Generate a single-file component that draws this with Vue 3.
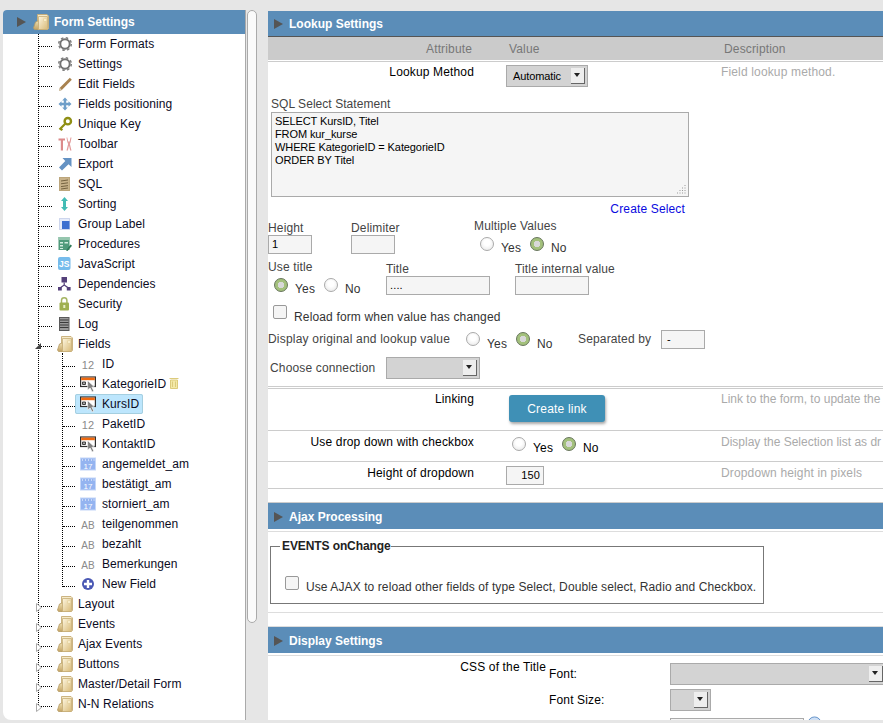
<script setup>
const formItems = [
  ['Form Formats', 'gear'], ['Settings', 'gear'], ['Edit Fields', 'pencil'], ['Fields positioning', 'move'],
  ['Unique Key', 'key'], ['Toolbar', 'tools'], ['Export', 'export'], ['SQL', 'sql'], ['Sorting', 'sort'],
  ['Group Label', 'group'], ['Procedures', 'proc'], ['JavaScript', 'js'], ['Dependencies', 'dep'],
  ['Security', 'lock'], ['Log', 'log']
]
const fields = [
  ['ID', 'num'], ['KategorieID', 'sel'], ['KursID', 'sel'], ['PaketID', 'num'], ['KontaktID', 'sel'],
  ['angemeldet_am', 'cal'], ['bestätigt_am', 'cal'], ['storniert_am', 'cal'], ['teilgenommen', 'ab'],
  ['bezahlt', 'ab'], ['Bemerkungen', 'ab'], ['New Field', 'plus']
]
const folders = ['Layout', 'Events', 'Ajax Events', 'Buttons', 'Master/Detail Form', 'N-N Relations']
const sql = 'SELECT KursID, Titel\nFROM kur_kurse\nWHERE KategorieID = KategorieID\nORDER BY Titel'
</script>

<template>
  <div class="page">
    <svg class="defs" width="0" height="0" aria-hidden="true">
      <defs>
        <linearGradient id="fold" x1="0" y1="0" x2="1" y2="1">
          <stop offset="0" stop-color="#fdf6e0" />
          <stop offset="1" stop-color="#d8ba78" />
        </linearGradient>
        <linearGradient id="fold2" x1="0" y1="0" x2="0" y2="1">
          <stop offset="0" stop-color="#efe0b4" />
          <stop offset="1" stop-color="#c4a464" />
        </linearGradient>
        <symbol id="i-folder" viewBox="0 0 16 16">
          <path d="M4.500 .5h9.500l1.500 1.500v12.500l-1 1H4.500z" fill="#f6ebca" stroke="#c6ad76" stroke-width=".9" />
          <path d="M.5 14l2-6 3.500-1.500V15.500H1.500z" fill="url(#fold2)" stroke="#b59c64" stroke-width=".8" />
          <path d="M5.500 2.500h9v12a1 1 0 0 1-1 1H5.500z" fill="url(#fold)" stroke="#c6ad76" stroke-width=".8" />
          <rect x="10.500" y="5" width="3" height="2" fill="#fff6d8" stroke="#dfca92" stroke-width=".5" />
        </symbol>
        <symbol id="i-gear" viewBox="0 0 16 16">
          <circle cx="8" cy="8" r="4.700" fill="none" stroke="#737373" stroke-width="2" />
          <circle cx="8" cy="8" r="6.300" fill="none" stroke="#808080" stroke-width="1.500" stroke-dasharray="2.500 2.450" />
        </symbol>
        <symbol id="i-pencil" viewBox="0 0 16 16">
          <path d="M2 15l.8-3.300L12.800 1.800l2 2L4.800 14z" fill="#a8824f" />
          <path d="M2 15l.8-3.300 2 2.300z" fill="#d9cdb5" />
        </symbol>
        <symbol id="i-move" viewBox="0 0 16 16">
          <path d="M8 1.500l2.800 3H9.200v2.300h2.300V5.200l3 2.800-3 2.800V9.200H9.200v2.300h1.600L8 14.500l-2.800-3h1.600V9.200H4.500v1.600l-3-2.800 3-2.800v1.600h2.300V4.500H5.200z" fill="#6f9fc9" />
        </symbol>
        <symbol id="i-key" viewBox="0 0 16 16">
          <circle cx="10.800" cy="5.200" r="3.200" fill="none" stroke="#8f8f14" stroke-width="2.400" />
          <path d="M8.500 7.500L2.500 13.500M3.500 12.500l1.800 1.800" stroke="#8f8f14" stroke-width="2.200" fill="none" />
        </symbol>
        <symbol id="i-tools" viewBox="0 0 16 16">
          <path d="M1.500 2.500h6.500v2H6v10H3.800v-10H1.500z" fill="#dc8a8a" />
          <path d="M9.500 1.500l.8 4.500 .8 2-1.600 6.500h1.400l1.100-5 1.100 5h1.400l-1.600-6.500.8-2 .8-4.500h-1l-.9 4h-1.400l-.9-4z" fill="#e29c9c" />
        </symbol>
        <symbol id="i-export" viewBox="0 0 16 16">
          <path d="M5.500 2H14.500v9l-3-2.800L5 14.500 2 11.500l6.300-6.500z" fill="#6492c3" />
        </symbol>
        <symbol id="i-sql" viewBox="0 0 16 16">
          <rect x="2.500" y="1.500" width="10" height="13" fill="#c8b28a" stroke="#bca67c" />
          <path d="M4 5l7-1M4 7.800l7-1M4 10.600l7-1M4 13l7-1" stroke="#756240" stroke-width="1" />
        </symbol>
        <symbol id="i-sort" viewBox="0 0 16 16">
          <path d="M7.500 1l3.500 4H9v6h2l-3.500 4L4 11h2V5H4z" fill="#43bcb5" />
        </symbol>
        <symbol id="i-group" viewBox="0 0 16 16">
          <rect x="2.500" y="2.500" width="10" height="11" fill="#e6ecfa" stroke="#a8b6de" stroke-dasharray="1 1" />
          <rect x="5" y="5" width="7.500" height="8" fill="#3b6fd0" />
        </symbol>
        <symbol id="i-proc" viewBox="0 0 16 16">
          <rect x="1.500" y="1" width="11" height="13" fill="#4f9a7b" />
          <rect x="1.500" y="1" width="11" height="3" fill="#95c6ae" />
          <path d="M3 6h3v1.500H3zM3 9h3v1.500H3zM3 12h3v1H3zM7.500 6h3.500v1.500H7.500z" fill="#d4ece0" />
          <path d="M9 14.500l4.500-6 1.500 1.300-4.500 5.200z" fill="#2f7a5a" />
        </symbol>
        <symbol id="i-js" viewBox="0 0 16 16">
          <rect x="1" y="1" width="12.500" height="13" rx="2" fill="#76bcec" />
          <text x="7.200" y="11.300" font-size="8.500" font-weight="700" text-anchor="middle" fill="#fff" font-family="Liberation Sans">JS</text>
        </symbol>
        <symbol id="i-dep" viewBox="0 0 16 16">
          <rect x="4.500" y="1" width="5.500" height="5.500" fill="#54407a" />
          <path d="M7.200 6.500v2.500M3 12L7.200 9l4.300 3" fill="none" stroke="#54407a" stroke-width="1.200" />
          <rect x="1" y="11" width="3.800" height="3.500" fill="#54407a" />
          <rect x="9.800" y="11" width="3.800" height="3.500" fill="#54407a" />
        </symbol>
        <symbol id="i-lock" viewBox="0 0 16 16">
          <path d="M4.500 7V4.500a2.700 2.700 0 0 1 5.400 0V7" fill="none" stroke="#a6b564" stroke-width="1.500" />
          <rect x="2.500" y="6.500" width="9.500" height="8" rx="1" fill="#9fb050" />
          <rect x="6.300" y="9" width="2" height="3" fill="#e9efc8" />
        </symbol>
        <symbol id="i-log" viewBox="0 0 16 16">
          <rect x="2.500" y="1.500" width="9.500" height="13" fill="#9a9a9a" stroke="#5a5a5a" />
          <path d="M3 4h8.500M3 6.500h8.500M3 9h8.500M3 11.500h8.500" stroke="#3a3a3a" stroke-width="1.100" />
        </symbol>
        <symbol id="i-num" viewBox="0 0 16 16">
          <text x="8" y="12.500" font-size="11" text-anchor="middle" fill="#8a8a8a" font-family="Liberation Sans">12</text>
        </symbol>
        <symbol id="i-ab" viewBox="0 0 16 16">
          <text x="8" y="12.500" font-size="10" text-anchor="middle" fill="#8a8a8a" font-family="Liberation Sans">AB</text>
        </symbol>
        <symbol id="i-sel" viewBox="0 0 16 16">
          <rect x=".6" y="1" width="14.800" height="9.500" fill="#fff" stroke="#2f2f2f" stroke-width="1.200" />
          <rect x="1.200" y="1.600" width="13.600" height="2.600" fill="#f0690f" />
          <path d="M2.500 6h3v2.500h-3zM4 6v2.500" fill="none" stroke="#333" stroke-width=".9" />
          <path d="M7.500 4.500l7 6.500-2.600.2 1.900 3.900-1.700.8-1.900-3.900-2.500 1.900z" fill="#808080" stroke="#fff" stroke-width=".6" />
        </symbol>
        <symbol id="i-cal" viewBox="0 0 16 16">
          <rect x=".5" y="2" width="15" height="12" fill="#94b4f0" stroke="#c4d6f8" />
          <path d="M2.500 3.500v1M5.500 3.500v1M8.500 3.500v1M11.500 3.500v1M14 3.500v1" stroke="#fff" />
          <text x="8" y="12.600" font-size="8" text-anchor="middle" fill="#fff" font-family="Liberation Sans">17</text>
        </symbol>
        <symbol id="i-plus" viewBox="0 0 16 16">
          <circle cx="8" cy="8" r="6" fill="#4a58b4" />
          <path d="M8 4v8M4 8h8" stroke="#fff" stroke-width="2.400" />
        </symbol>
      </defs>
    </svg>

    <aside class="side">
      <div class="tree-panel">
        <div class="tree-head">
          <span class="tri"></span>
          <svg class="ic top-ic"><use href="#i-folder" /></svg>
          <span>Form Settings</span>
        </div>
        <div class="tree">
          <div v-for="item in formItems" :key="item[0]" class="row">
            <span class="conn"></span>
            <span class="node">
              <svg class="ic"><use :href="'#i-' + item[1]" /></svg>{{ item[0] }}
            </span>
          </div>
          <div class="row">
            <span class="conn"><span class="exp-open"></span></span>
            <span class="node"><svg class="ic"><use href="#i-folder" /></svg>Fields</span>
          </div>
          <div class="subtree">
            <div v-for="item in fields" :key="item[0]" class="row">
              <span class="conn"></span>
              <span class="node sub" :class="{ picked: item[0] === 'KursID' }">
                <svg class="ic"><use :href="'#i-' + item[1]" /></svg>{{ item[0] }}
              </span>
              <svg v-if="item[0] === 'KategorieID'" class="trash" viewBox="0 0 10 12">
                <path d="M.5 1.500h9M1.500 3h7v8.500h-7z" fill="#f3e9a8" stroke="#dccb7c" />
                <path d="M3.500 4.500v5.500M6.500 4.500v5.500" stroke="#dccb7c" />
              </svg>
            </div>
          </div>
          <div v-for="name in folders" :key="name" class="row">
            <span class="conn">
              <svg class="exp-closed" viewBox="0 0 6 9"><path d="M.5.5L5.500 4.500 .5 8.500z" fill="#fff" stroke="#aaa" /></svg>
            </span>
            <span class="node"><svg class="ic"><use href="#i-folder" /></svg>{{ name }}</span>
          </div>
        </div>
      </div>
      <div class="scroll"><div class="thumb"></div></div>
    </aside>

    <main class="main">
      <div class="sec-head first"><span class="tri"></span>Lookup Settings</div>
      <div class="thead">
        <span class="th-attr">Attribute</span>
        <span class="th-val">Value</span>
        <span class="th-desc">Description</span>
      </div>

      <section class="lookup">
        <div class="method">
          <span class="attr">Lookup Method</span>
          <span class="select sel-method">Automatic<i class="arrow"></i></span>
          <span class="desc">Field lookup method.</span>
        </div>

        <div class="sql-label">SQL Select Statement</div>
        <div class="sql-wrap">
          <textarea class="sql" readonly :value="sql"></textarea>
          <svg class="grip" viewBox="0 0 10 10">
            <path d="M8.500 1.500h1M8.500 4h1M8.500 6.500h1M8.500 9h1M6 4h1M6 6.500h1M6 9h1M3.500 6.500h1M3.500 9h1M1 9h1" stroke="#999" stroke-width="1" />
          </svg>
        </div>
        <div class="create-select"><a class="link">Create Select</a></div>

        <div class="fields-a">
          <div class="cell w83">
            <label class="lbl">Height</label>
            <span class="input w44">1</span>
          </div>
          <div class="cell w123">
            <label class="lbl">Delimiter</label>
            <span class="input w44"></span>
          </div>
          <div class="cell up">
            <label class="lbl">Multiple Values</label>
            <div class="radios ind6">
              <i class="radio"></i><span class="opt o-yes">Yes</span>
              <i class="radio on"></i><span class="opt">No</span>
            </div>
          </div>
        </div>

        <div class="fields-b">
          <div class="cell w118 up">
            <label class="lbl">Use title</label>
            <div class="radios ind6">
              <i class="radio on"></i><span class="opt o-yes">Yes</span>
              <i class="radio"></i><span class="opt">No</span>
            </div>
          </div>
          <div class="cell w129">
            <label class="lbl">Title</label>
            <span class="input w104">....</span>
          </div>
          <div class="cell">
            <label class="lbl">Title internal value</label>
            <span class="input w74"></span>
          </div>
        </div>

        <div class="reload">
          <i class="check"></i><span class="opt low">Reload form when value has changed</span>
        </div>

        <div class="display">
          <span class="dlabel">Display original and lookup value</span>
          <div class="radios">
            <i class="radio"></i><span class="opt low o-yes">Yes</span>
            <i class="radio on"></i><span class="opt low">No</span>
          </div>
          <span class="sep">Separated by</span>
          <span class="input w44 ind-dash">-</span>
        </div>

        <div class="conn-row">
          <span class="clabel">Choose connection</span>
          <span class="select sel-conn"><i class="arrow"></i></span>
        </div>
      </section>

      <div class="prop p-link">
        <span class="attr">Linking</span>
        <div class="val"><button class="btn">Create link</button></div>
        <span class="desc tight">Link to the form, to update the</span>
      </div>
      <div class="prop p-drop">
        <span class="attr">Use drop down with checkbox</span>
        <div class="val radios">
          <i class="radio"></i><span class="opt o-yes">Yes</span>
          <i class="radio on"></i><span class="opt">No</span>
        </div>
        <span class="desc tight">Display the Selection list as dr</span>
      </div>
      <div class="prop p-height">
        <span class="attr">Height of dropdown</span>
        <div class="val"><span class="input w38 right">150</span></div>
        <span class="desc">Dropdown height in pixels</span>
      </div>

      <div class="sec-head ajax"><span class="tri"></span>Ajax Processing</div>
      <div class="rule"></div>
      <div class="events-wrap">
        <fieldset class="events">
          <legend>EVENTS onChange</legend>
          <i class="check"></i><span class="opt ev-text">Use AJAX to reload other fields of type Select, Double select, Radio and Checkbox.</span>
        </fieldset>
      </div>

      <div class="sec-head disp"><span class="tri"></span>Display Settings</div>
      <div class="rule"></div>
      <div class="css-block">
        <span class="attr css-attr">CSS of the Title</span>
        <div class="css-grid">
          <span class="css-lbl">Font:</span><span class="select sel-font"><i class="arrow"></i></span>
          <span class="css-lbl lbl2">Font Size:</span><span class="select sel-size"><i class="arrow"></i></span>
          <span></span>
          <div class="color-row">
            <span class="input w134"></span>
            <svg class="wheel" viewBox="0 0 16 16"><circle cx="8" cy="8" r="7" fill="#cfe0f5" stroke="#5f8fc8" /><path d="M3 6h10M3 10h10" stroke="#5f8fc8" /></svg>
          </div>
        </div>
      </div>
    </main>
  </div>
</template>

<style scoped>
.page {
  display: flex;
  height: 723px;
  width: 883px;
  overflow: hidden;
  background: #e6e6e6;
  font: 12px/14px "Liberation Sans", Arial, sans-serif;
  color: #000;
}
.defs { position: absolute; }
i { display: inline-block; font-style: normal; }

/* left tree */
.side {
  display: flex;
  height: 710px;
  margin: 10px 0 0 3px;
  width: 255px;
  flex: none;
}
.tree-panel {
  width: 243px;
  flex: none;
  background: #fff;
  border-right: 1px solid #aaa;
  box-sizing: border-box;
  border-radius: 4px 0 0 8px;
  overflow: hidden;
}
.tree-head {
  height: 24px;
  background: #5b8db8;
  color: #fff;
  font-weight: 700;
  display: flex;
  align-items: center;
  padding-left: 14px;
}
.tri {
  width: 0;
  height: 0;
  border-left: 9px solid #555;
  border-top: 5px solid transparent;
  border-bottom: 5px solid transparent;
  margin-right: 6px;
  flex: none;
}
.tree-head .tri { margin-right: 7px; }
.top-ic { margin-right: 5px; width: 16px; height: 16px; }
.tree {
  position: relative;
  margin-left: 35px;
  padding-bottom: 6px;
  letter-spacing: .08px;
}
.tree::before {
  content: "";
  position: absolute;
  left: 0;
  top: 0;
  bottom: 13px;
  border-left: 1px dotted #000;
}
.subtree { position: relative; margin-left: 24px; }
.subtree::before {
  content: "";
  position: absolute;
  left: 0;
  top: -1px;
  bottom: 7px;
  border-left: 1px dotted #000;
}
.subtree .conn { width: 12px; }
.row {
  height: 20px;
  display: flex;
  align-items: center;
  white-space: nowrap;
  color: #0b0b1e;
}
.conn {
  position: relative;
  width: 13px;
  margin-left: 1px;
  height: 12px;
  border-bottom: 1px dotted #000;
  align-self: flex-start;
  flex: none;
}
.node {
  height: 20px;
  box-sizing: border-box;
  display: flex;
  align-items: center;
  padding: 0 4px 0 5px;
  border-radius: 2px;
}
.ic { width: 16px; height: 16px; margin-right: 5px; flex: none; }
.sub .ic { margin-right: 6px; }
.picked {
  background: #bde6fd;
  outline: 1px solid #a5cfe0;
  outline-offset: -1px;
}
.trash { width: 10px; height: 12px; margin-left: -1px; margin-top: -2px; }
.exp-closed {
  position: absolute;
  left: -3px;
  top: 9px;
  width: 6px;
  height: 9px;
}
.exp-open {
  position: absolute;
  width: 0;
  height: 0;
  left: -4px;
  top: 9px;
  border-right: 6px solid #444;
  border-top: 6px solid transparent;
}
.scroll {
  width: 12px;
  background: #e6e6e6;
  padding: 0 1px;
  box-sizing: border-box;
  flex: none;
}
.thumb {
  height: 613px;
  background: #fafafa;
  border: 1px solid #aaa;
  border-radius: 5px;
  box-sizing: border-box;
}

/* right */
.main {
  margin: 11px 0 0 10px;
  width: 615px;
  height: 709px;
  flex: none;
  overflow: hidden;
  background: #fff;
  white-space: nowrap;
  color: #222;
  letter-spacing: .15px;
}
.sec-head {
  height: 26px;
  background: #5b8db8;
  color: #fff;
  font-weight: 700;
  display: flex;
  align-items: center;
  padding-left: 6px;
  box-sizing: border-box;
  letter-spacing: 0;
}
.first { border-bottom: 1px solid #555; }
.thead {
  height: 23px;
  background: #cbcbcb;
  border-bottom: 1px solid #fff;
  box-shadow: 0 1px 0 #ccc;
  position: relative;
  display: flex;
  align-items: center;
  color: #777;
}
.th-attr { margin-left: 158px; width: 83px; }
.th-val { width: 215px; }

.attr { width: 206px; text-align: right; flex: none; color: #000; }
.desc { color: #aaa; }
.desc.tight { letter-spacing: 0; }
.lookup {
  height: 326px;
  box-sizing: border-box;
  padding-top: 4px;
  border-bottom: 1px solid #ccc;
}
.method { display: flex; height: 22px; }
.method .sel-method { margin: 0 133px 0 32px; }
.select {
  position: relative;
  display: inline-block;
  box-sizing: border-box;
  height: 22px;
  background: #d3d3d3;
  border: 1px solid #aaa;
  font-size: 11px;
  line-height: 20px;
  color: #000;
  flex: none;
  letter-spacing: -.1px;
}
.sel-method { width: 82px; padding-left: 6px; }
.arrow {
  position: absolute;
  right: 2px;
  top: 2px;
  width: 14px;
  height: 16px;
  background: #eee;
  border-right: 1px solid #666;
  border-bottom: 1px solid #666;
  box-sizing: border-box;
}
.arrow::after {
  content: "";
  position: absolute;
  left: 3px;
  top: 5px;
  border-top: 4px solid #222;
  border-left: 3.5px solid transparent;
  border-right: 3.5px solid transparent;
}
.sql-label { margin: 10px 0 1px 3px; color: #444; letter-spacing: .05px; }
.sql-wrap { position: relative; width: 418px; margin-left: 3px; height: 85px; }
.sql {
  display: block;
  width: 418px;
  height: 85px;
  box-sizing: border-box;
  padding: 2px 3px;
  background: #f5f5f5;
  border: 1px solid #aaa;
  font: 11px/13px "Liberation Sans", Arial, sans-serif;
  letter-spacing: -.1px;
  color: #000;
  outline: none;
  resize: none;
}
.grip { position: absolute; right: 3px; bottom: 3px; width: 10px; height: 10px; }
.create-select { width: 417px; text-align: right; margin-top: 5px; height: 14px; }
.link { color: #0a0ae0; }
.fields-a { display: flex; margin-top: 3px; height: 38px; color: #444; }
.fields-b { display: flex; height: 38px; color: #444; margin-top: 3px; }
.cell { flex: none; padding-top: 2px; }
.cell.up { padding-top: 0; }
.w83 { width: 83px; }
.w123 { width: 123px; }
.w118 { width: 118px; }
.w129 { width: 129px; }
.lbl { display: block; }
.input {
  display: block;
  box-sizing: border-box;
  height: 19px;
  background: #f5f5f5;
  border: 1px solid #aaa;
  font-size: 11px;
  line-height: 17px;
  padding: 0 3px;
  color: #000;
  flex: none;
}
.ind-dash { padding-left: 5px; }
.w44 { width: 44px; }
.w38 { width: 38px; }
.w74 { width: 74px; }
.w104 { width: 104px; }
.w134 { width: 134px; }
.right { text-align: right; }
.radios { display: flex; align-items: flex-start; margin-top: 4px; }
.ind6 { padding-left: 6px; }
.radio {
  width: 14px;
  height: 14px;
  box-sizing: border-box;
  border-radius: 50%;
  border: 1px solid #aaa;
  background: radial-gradient(circle at 50% 40%, #fff 0 30%, #e4e4e4 100%);
  flex: none;
}
.radio.on {
  border-color: #66755a;
  background: radial-gradient(circle, #d8d8d8 0 3px, #a3c07c 3.5px);
}
.opt { margin: 4px 0 0 7px; color: #333; }
.opt.low { margin-top: 5px; }
.radios .opt { flex: none; }
.o-yes { width: 29px; }
.reload { display: flex; margin: 7px 0 0 5px; height: 18px; align-items: flex-start; }
.check {
  width: 14px;
  height: 14px;
  box-sizing: border-box;
  border: 1px solid #999;
  border-radius: 2px;
  background: #f5f5f5;
  flex: none;
}
.display { display: flex; align-items: flex-start; margin-top: 7px; height: 19px; color: #444; }
.dlabel { width: 198px; margin-top: 2px; flex: none; letter-spacing: .2px; }
.display .radios { margin-top: 2px; width: 112px; }
.sep { width: 83px; margin-top: 2px; flex: none; }
.conn-row { display: flex; align-items: center; margin: 8px 0 0 2px; color: #444; }
.clabel { width: 116px; flex: none; }
.sel-conn { width: 94px; }

.prop { display: flex; border-bottom: 1px solid #ccc; box-sizing: border-box; }
.prop .attr { padding-top: 4px; }
.prop .val { width: 215px; margin-left: 32px; flex: none; }
.prop .desc { padding-top: 4px; }
.p-link { height: 43px; border-top: 1px solid #ccc; margin-top: 1px; }
.p-drop { height: 31px; }
.p-height { height: 27px; }
.p-link .attr, .p-link .desc { padding-top: 3px; }
.p-link .val { padding: 6px 0 0 3px; width: 212px; box-sizing: content-box; }
.btn {
  display: block;
  width: 96px;
  height: 27px;
  border: 0;
  border-radius: 3px;
  background: #3f90b6;
  color: #fff;
  font: 12px "Liberation Sans", Arial, sans-serif;
  letter-spacing: .2px;
  box-shadow: 1px 2px 3px rgba(0, 0, 0, .35);
}
.prop.p-drop .val { margin-top: 6px; padding-left: 6px; width: 209px; box-sizing: content-box; }
.p-drop .opt { color: #000; }
.p-height .val { padding-top: 4px; }
.ajax { margin-top: 14px; box-shadow: 0 -1px 0 #ccc; padding-top: 1px; }
.rule { height: 1px; background: #ddd; margin-top: 2px; }
.events-wrap {
  height: 81px;
  box-sizing: border-box;
  border-bottom: 1px solid #ddd;
  padding: 7px 0 0 2px;
}
.events {
  width: 494px;
  height: 65px;
  box-sizing: border-box;
  margin: 0;
  padding: 23px 0 0 14px;
  border: 1px solid #777;
  display: flex;
  align-items: flex-start;
}
.events legend {
  font-weight: 700;
  margin-left: -5px;
  padding: 0 0 0 2px;
  color: #222;
  letter-spacing: -.1px;
}
.ev-text { letter-spacing: .09px; }
.disp { margin-top: 14px; box-shadow: 0 -1px 0 #ddd; padding-top: 1px; }
.css-block { display: flex; padding-top: 4px; }
.css-attr { width: 278px; }
.css-grid {
  display: grid;
  grid-template-columns: 121px 1fr;
  margin: 3px 0 0 3px;
  color: #000;
}
.css-lbl { height: 22px; box-sizing: border-box; padding-top: 4px; }
.lbl2 { margin-top: 4px; }
.sel-font { width: 216px; }
.sel-size { width: 41px; margin-top: 4px; }
.color-row { display: flex; margin-top: 7px; align-items: flex-start; }
.wheel { width: 15px; height: 15px; margin: -2px 0 0 3px; }
</style>
